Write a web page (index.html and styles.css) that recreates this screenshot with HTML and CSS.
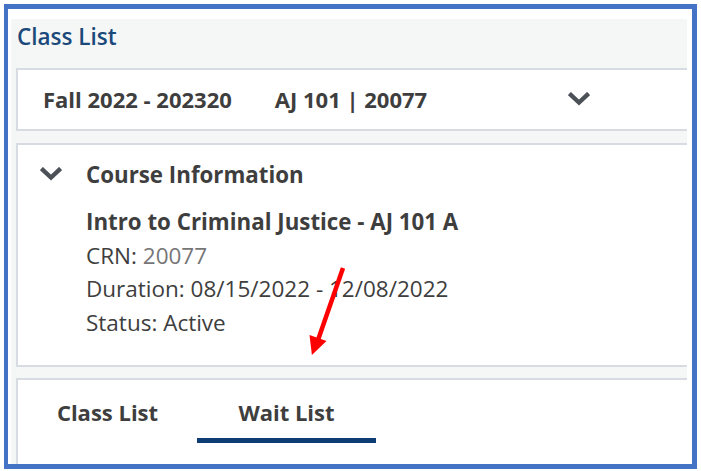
FILE: index.html
```html
<!DOCTYPE html>
<html>
<head>
<meta charset="utf-8">
<link rel="stylesheet" href="styles.css">
</head>
<body>
<div class="frame">
  <div class="page">
    <h1 class="title">Class List</h1>
    <div class="card term-card">
      <span class="term">Fall 2022 - 202320</span>
      <span class="course">AJ 101 | 20077</span>
      <svg class="chev chev-term" width="22" height="14" viewBox="0 0 22 14"><polyline points="3,3 11,10.5 19,3" fill="none" stroke="#4b5157" stroke-width="4.4" stroke-linecap="square"/></svg>
    </div>
    <div class="card info-card">
      <div class="info-head">
        <svg class="chev" width="22" height="14" viewBox="0 0 22 14"><polyline points="3,3 11,10.5 19,3" fill="none" stroke="#4b5157" stroke-width="4.4" stroke-linecap="square"/></svg>
        <span class="info-title">Course Information</span>
      </div>
      <div class="info-body">
        <div class="line strong">Intro to Criminal Justice - AJ 101 A</div>
        <div class="line">CRN: <span class="muted">20077</span></div>
        <div class="line">Duration: 08/15/2022 - 12/08/2022</div>
        <div class="line">Status: Active</div>
      </div>
    </div>
    <div class="card tabs-card">
      <div class="tab">Class List</div>
      <div class="tab active">Wait List</div>
    </div>
  </div>
</div>
<svg class="arrow" width="60" height="100" viewBox="0 0 60 100">
  <line x1="43" y1="8" x2="18" y2="80" stroke="#ff0000" stroke-width="4.5"/>
  <polygon points="11.9,94.9 26.5,81 9.5,75" fill="#ff0000"/>
</svg>
</body>
</html>
```
FILE: styles.css
```css
html, body {
  margin: 0;
  padding: 0;
  background: #ffffff;
}
body {
  width: 701px;
  height: 471px;
  overflow: hidden;
  font-family: "Open Sans", "Liberation Sans", sans-serif;
  color: #3e3e3e;
}
.frame {
  margin: 4px 0 0 4px;
  border-style: solid;
  border-color: #4472c4;
  border-width: 5px 5px 5px 4px;
  padding: 10px 5px 0 3px;
  box-sizing: border-box;
  width: 693px;
  height: 465px;
}
.page {
  background: #f5f6f6;
  height: 100%;
  overflow: hidden;
  padding: 4px 0 0 5px;
  box-sizing: border-box;
}
.title {
  margin: 0 0 17px 1px;
  font-size: 22.5px;
  line-height: 28px;
  font-weight: 600;
  color: #1b4a7a;
}
.card {
  background: #ffffff;
  border: 2px solid #d6dce1;
  width: 720px;
  box-sizing: border-box;
}
.term-card {
  height: 63px;
  display: flex;
  align-items: center;
  padding: 0 0 1px 25px;
  font-size: 22px;
  line-height: 30px;
  font-weight: 700;
}
.term { margin-right: 43px; }
.course { width: 293px; }
.chev { display: block; }
.chev-term { margin-top: -1px; }
.info-card {
  margin-top: 12px;
  height: 224px;
  padding: 15px 0 0 22px;
}
.info-head {
  display: flex;
  align-items: center;
  gap: 24px;
  font-size: 22.3px;
  line-height: 30px;
  font-weight: 700;
}
.info-head .chev { margin-top: -2px; }
.info-body {
  margin: 15px 0 0 46px;
  font-size: 22.5px;
  line-height: 33.6px;
}
.strong { font-weight: 700; font-size: 22.3px; }
.muted { color: #767676; }
.tabs-card {
  margin-top: 11px;
  height: 120px;
  display: flex;
  align-items: flex-start;
}
.tab {
  width: 179px;
  text-align: center;
  font-size: 22px;
  line-height: 30px;
  font-weight: 700;
  padding: 17px 0 11px;
  border-bottom: 5px solid transparent;
}
.tab.active {
  border-bottom-color: #0d3d74;
}
.arrow {
  position: absolute;
  left: 300px;
  top: 260px;
}
```
